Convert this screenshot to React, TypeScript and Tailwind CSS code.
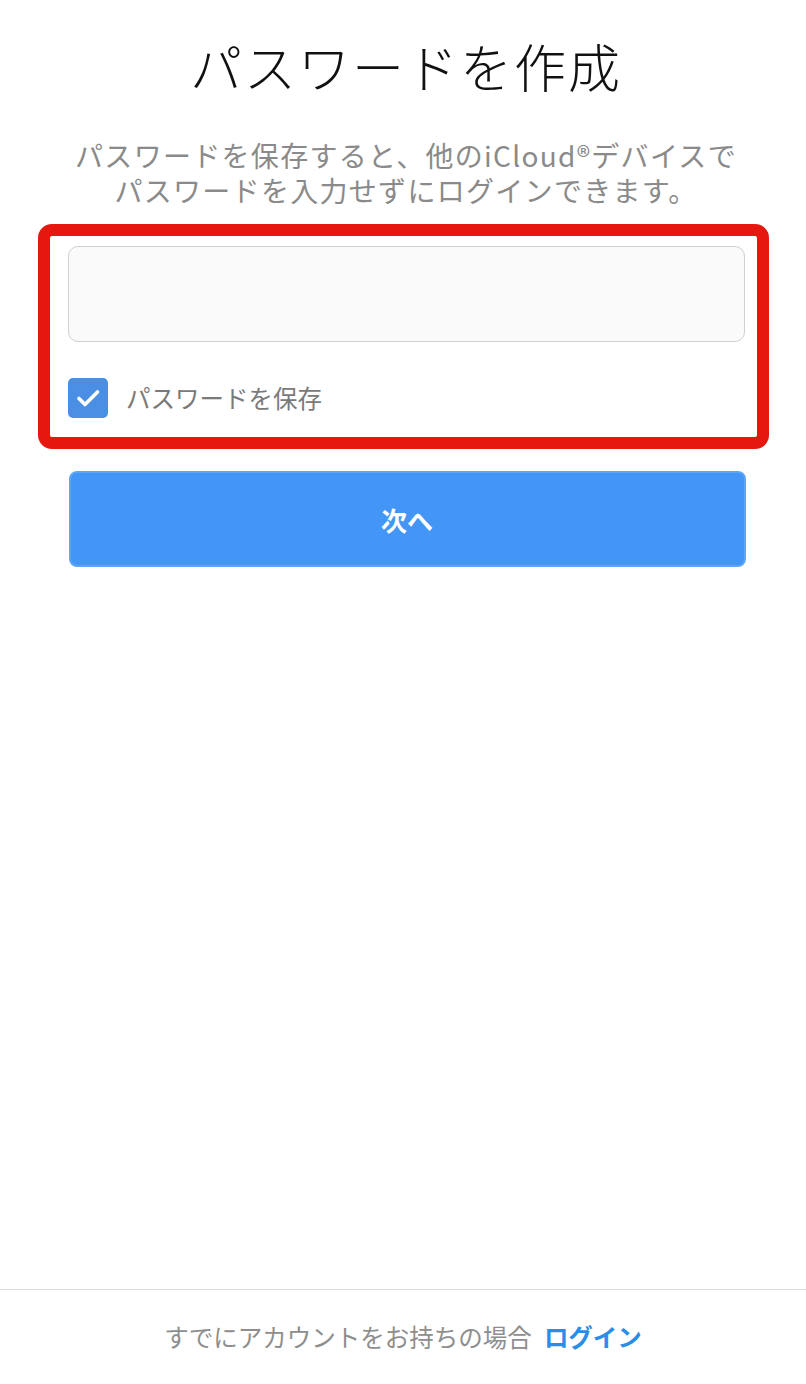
import { useState } from "react";

const font = { fontFamily: '"Noto Sans CJK JP", "Noto Sans", sans-serif' };

const App = () => {
  const [password, setPassword] = useState("");
  const [save, setSave] = useState(true);

  return (
    <div className="min-h-[1384px] flex flex-col bg-white" style={font}>
      <div className="flex flex-col items-center pt-[36px]">
        <h1 className="ml-[6px] text-[52px] leading-[60px] font-light text-[#111] tracking-[2px]">
          パスワードを作成
        </h1>
        <p className="mt-[42px] ml-[6px] text-[28px] leading-[35px] tracking-[1.3px] text-[#8a8a8a] text-center">
          パスワードを保存すると、他のiCloud®デバイスで
          <br />
          パスワードを入力せずにログインできます。
        </p>

        <div className="mt-[16px] w-[731px] ml-[1px] border-[12px] border-[#e5170f] rounded-[14px] pt-[10px] pb-[19px] pl-[18px] pr-[12px]">
          <input
            type="password"
            className="block w-[677px] h-[96px] rounded-[10px] border border-[#cfcfcf] bg-[#fafafa] px-4 text-[26px] focus:outline-none"
            value={password}
            onChange={(e) => setPassword(e.target.value)}
          />
          <label className="mt-[36px] flex items-center gap-[18px] cursor-pointer">
            <span
              onClick={() => setSave(!save)}
              className="w-[40px] h-[40px] rounded-[5px] bg-[#4a8fe3] flex items-center justify-center"
            >
              {save && (
                <svg width="28" height="28" viewBox="0 0 28 28" fill="none">
                  <path
                    d="M5 14.5l6 6L23.5 8"
                    stroke="white"
                    strokeWidth="3.6"
                    strokeLinecap="round"
                    strokeLinejoin="round"
                  />
                </svg>
              )}
            </span>
            <span className="text-[24.5px] leading-[40px] text-[#7a7a7a]">パスワードを保存</span>
          </label>
        </div>

        <button className="mt-[22px] ml-[8px] w-[677px] h-[96px] rounded-[8px] bg-[#4396f5] border-2 border-[#5ba6f6] text-white text-[26px] font-bold">
          次へ
        </button>
      </div>

      <div className="flex-1" />

      <div className="h-[95px] border-t border-[#dedede] flex items-center justify-center gap-[12px] text-[24.5px]">
        <span className="text-[#8e8e8e]">すでにアカウントをお持ちの場合</span>
        <a href="#" className="text-[#2b8de6] font-bold">ログイン</a>
      </div>
    </div>
  );
};

export default App;
